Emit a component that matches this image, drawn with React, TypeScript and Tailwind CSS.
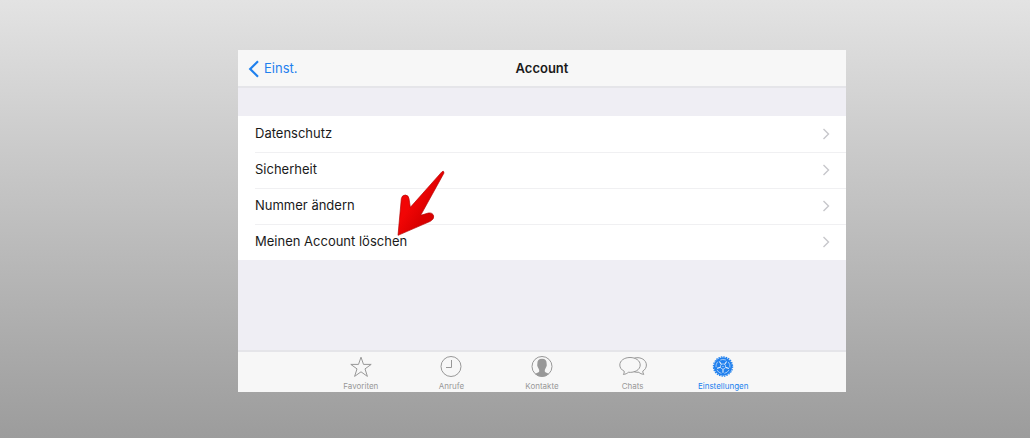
import type { ReactNode } from "react";

const rows = ["Datenschutz", "Sicherheit", "Nummer ändern", "Meinen Account löschen"];

function StarIcon() {
  return (
    <svg viewBox="0 0 28 24" className="h-6 w-7" fill="none" stroke="currentColor" strokeWidth="1" strokeLinejoin="miter" aria-hidden="true">
      <path d="M14 2.2 16.5 9.4H24.2L18 13.9 20.4 21.4 14 16.8 7.6 21.4 10 13.9 3.8 9.4H11.5Z" />
    </svg>
  );
}

function ClockIcon() {
  return (
    <svg viewBox="0 0 28 24" className="h-6 w-7" fill="none" stroke="currentColor" strokeWidth="1" aria-hidden="true">
      <circle cx="14" cy="11.5" r="10" />
      <path d="M14.5 5V12.5H9" />
    </svg>
  );
}

function ContactIcon() {
  return (
    <svg viewBox="0 0 28 24" className="h-6 w-7" aria-hidden="true">
      <circle cx="14" cy="11.5" r="10" fill="none" stroke="currentColor" strokeWidth="1" />
      <path
        fill="currentColor"
        d="M14 3.8C10.8 3.8 9.2 5.6 9.4 8.3L9.2 10.2C9.3 11.4 9.9 12.1 10.4 13.2L11.2 15V16.4C10.7 17.4 8.5 17.6 7.2 18.9C9 20.6 11.4 21.5 14 21.5S19 20.6 20.8 18.9C19.5 17.6 17.3 17.4 16.8 16.4V15L17.6 13.2C18.1 12.1 18.7 11.4 18.8 10.2L18.6 8.3C18.8 5.6 17.2 3.8 14 3.8Z"
      />
    </svg>
  );
}

function ChatsIcon() {
  return (
    <svg viewBox="0 0 28 24" className="h-6 w-7" fill="none" stroke="currentColor" strokeWidth="1" strokeLinejoin="round" aria-hidden="true">
      <path d="M11 2.5C5.2 2.5.8 5.7.8 10C.8 12.7 2.5 14.9 5.2 16.2C5.4 17.6 5 18.7 4.4 19.5C6.5 19.2 8.2 18.4 9.3 17.3C16 17.9 21.2 14.7 21.2 10C21.2 5.7 16.8 2.5 11 2.5Z" />
      <path d="M15.5 3C22 1.5 27.4 5.2 27.4 10C27.4 12.7 26 14.8 23.8 16.1C23.7 17.4 24.1 18.6 24.8 19.4C22.6 19.1 21 18.4 19.9 17.3C18 17.5 16.3 17.2 14.9 16.6" />
    </svg>
  );
}

function GearIcon() {
  return (
    <svg viewBox="0 0 28 24" className="h-6 w-7" aria-hidden="true">
      <circle cx="14" cy="11.5" r="9.2" fill="currentColor" />
      <circle cx="14" cy="11.5" r="9.6" fill="none" stroke="currentColor" strokeWidth="1.2" strokeDasharray="1.5 1.013" />
      <g fill="none" stroke="#e6f0fb" strokeWidth="0.6" transform="rotate(18 14 11.5)">
        <circle cx="14" cy="11.5" r="7" strokeDasharray="6 2.796" strokeDashoffset="-1.398" />
        <circle cx="14" cy="11.5" r="2.6" />
        <path strokeWidth="1.1" d="M16.8 11.5H20.2M14.9 14.2 15.9 17.4M11.7 13.1 9 15.1M11.7 9.9 9 7.9M14.9 8.8 15.9 5.6" />
      </g>
      <circle cx="14" cy="11.5" r="0.6" fill="#e6f0fb" />
    </svg>
  );
}

const tabs: { label: string; icon: ReactNode; active?: boolean }[] = [
  { label: "Favoriten", icon: <StarIcon /> },
  { label: "Anrufe", icon: <ClockIcon /> },
  { label: "Kontakte", icon: <ContactIcon /> },
  { label: "Chats", icon: <ChatsIcon /> },
  { label: "Einstellungen", icon: <GearIcon />, active: true },
];

function PointerArrow() {
  return (
    <svg viewBox="0 0 210 255" className="pointer-events-none absolute top-[110px] left-[147px] h-[85px] w-[70px]" aria-hidden="true">
      <defs>
        <linearGradient id="arrow-fill" x1="0.2" y1="0.3" x2="0.7" y2="0.75">
          <stop offset="0.3" stopColor="#f20505" />
          <stop offset="0.8" stopColor="#d90000" />
        </linearGradient>
      </defs>
      <path
        d="M39 226 49 116Q51 105 61 105 71 106 72 116L76 142 171 35Q177 31 177 39L107 166 130 159Q143 157 146 168 148 177 136 184Z"
        fill="url(#arrow-fill)"
        stroke="#b50000"
        strokeWidth="2"
        strokeLinejoin="round"
      />
    </svg>
  );
}

export default function App() {
  return (
    <div className="min-h-screen bg-linear-to-b from-[#e3e3e3] to-[#9c9c9c] pt-[50px] pr-[184px] pb-[46px] pl-[238px] font-['Inter','Liberation_Sans',sans-serif]">
      <main className="relative flex flex-col bg-[#efeef4] text-[#1a1a1a]">
        <header className="grid h-[38px] grid-cols-3 items-center border-b-2 border-[#e5e5e9] bg-[#f7f7f7] px-2.5 pt-0.5">
          <a href="#einstellungen" className="flex items-center gap-1 text-[13px] text-[#1f80ee]">
            <svg viewBox="0 0 12 18" className="h-[18px] w-3" fill="none" stroke="currentColor" strokeWidth="2.2" aria-hidden="true">
              <path d="M10 1.2 2.2 9 10 16.8" />
            </svg>
            Einst.
          </a>
          <h1 className="text-center text-[13px] font-semibold">Account</h1>
        </header>

        <ul className="mt-7 bg-white">
          {rows.map((label) => (
            <li key={label} className="group pl-[17px]">
              <a href="#detail" className="flex h-9 items-center justify-between border-t border-[#f0f0f2] pr-4 pb-px text-[13px] group-first:border-transparent">
                {label}
                <svg viewBox="0 0 8 12" className="h-3 w-2" fill="none" stroke="#c7c7cb" strokeWidth="1.4" aria-hidden="true">
                  <path d="M1.5 1 6.5 6 1.5 11" />
                </svg>
              </a>
            </li>
          ))}
        </ul>

        <nav className="mt-[90px] border-t-2 border-[#e5e5e9] bg-[#f7f7f7]">
          <div className="mx-auto grid h-10 max-w-[453px] grid-cols-5">
            {tabs.map((tab) => (
              <button
                key={tab.label}
                type="button"
                className={
                  tab.active
                    ? "flex flex-col items-center gap-px pt-[3px] text-[#2080ee]"
                    : "flex flex-col items-center gap-px pt-[3px] text-[#989898]"
                }
              >
                {tab.icon}
                <span className="text-[8px] leading-3">{tab.label}</span>
              </button>
            ))}
          </div>
        </nav>

        <PointerArrow />
      </main>
    </div>
  );
}
